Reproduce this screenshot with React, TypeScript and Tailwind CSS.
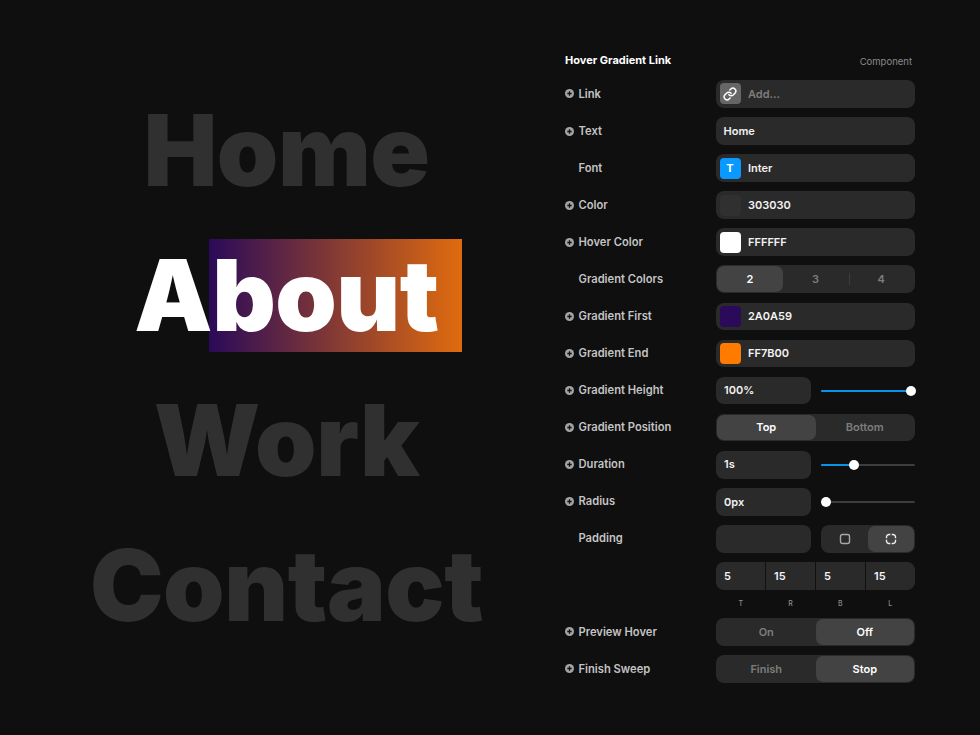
import type { ReactNode } from 'react';
import { Link } from 'lucide-react';

const links = ['Home', 'About', 'Work', 'Contact'];

function PlusDot() {
  return (
    <svg width="9" height="9" viewBox="0 0 9 9" className="shrink-0">
      <circle cx="4.5" cy="4.5" r="4.5" fill="#a3a3a3" />
      <path d="M4.5 2.3v4.4M2.3 4.5h4.4" stroke="#111111" strokeWidth="1.3" />
    </svg>
  );
}

function Row({ label, plus = true, children }: { label?: string; plus?: boolean; children: ReactNode }) {
  return (
    <div className="flex items-center">
      <div className="flex w-[151px] items-center gap-[4.5px] text-[11.2px] font-semibold text-[#c4c4c4]">
        <span className="flex w-[9px] justify-center">{plus && label && <PlusDot />}</span>
        {label}
      </div>
      <div className="w-[199px]">{children}</div>
    </div>
  );
}

function Field({ children, swatch }: { children?: ReactNode; swatch?: ReactNode }) {
  return (
    <div className="flex h-[27.7px] items-center gap-[7.5px] rounded-lg bg-[#2a2a2a] px-[3.5px] text-[11px] font-semibold text-[#f2f2f2]">
      {swatch}
      <span className={swatch ? '' : 'pl-1'}>{children}</span>
    </div>
  );
}

function Swatch({ color }: { color: string }) {
  return <span className="h-[21px] w-[21px] rounded-[4px]" style={{ background: color }} />;
}

function Segments({ items, active }: { items: string[]; active: number }) {
  return (
    <div className="flex h-[27.7px] items-stretch rounded-lg bg-[#2a2a2a] p-px text-[11px] font-semibold">
      {items.map((item, i) => (
        <div
          key={item}
          className={`flex flex-1 items-center justify-center rounded-[7px] ${i === active ? 'bg-[#434343] text-white' : 'text-[#7d7d7d]'}`}
        >
          {item}
        </div>
      ))}
    </div>
  );
}

function ValueSlider({ value, pct, filled = true }: { value: string; pct: number; filled?: boolean }) {
  return (
    <div className="flex items-center gap-[10px]">
      <div className="flex h-[27.7px] w-[95px] items-center rounded-lg bg-[#2a2a2a] pl-2 text-[11px] font-semibold text-[#f2f2f2]">
        {value}
      </div>
      <div className="relative h-[2px] flex-1 rounded-full bg-[#3d3d3d]">
        {filled && <div className="h-full rounded-full bg-[#0a93e6]" style={{ width: `${pct}%` }} />}
        <span
          className="absolute top-1/2 h-[10px] w-[10px] -translate-x-1/2 -translate-y-1/2 rounded-full bg-white"
          style={{ left: `${pct}%` }}
        />
      </div>
    </div>
  );
}

function Padding() {
  return (
    <div className="flex items-center gap-[10px]">
      <div className="h-[27.7px] w-[95px] rounded-lg bg-[#2a2a2a]" />
      <div className="flex h-[27.7px] flex-1 items-stretch rounded-lg bg-[#2a2a2a] p-px">
        <div className="flex flex-1 items-center justify-center">
          <svg width="12" height="12" viewBox="0 0 12 12" fill="none" stroke="#a8a8a8" strokeWidth="1.4">
            <rect x="1.5" y="1.5" width="9" height="9" rx="2" />
          </svg>
        </div>
        <div className="flex flex-1 items-center justify-center rounded-[7px] bg-[#434343]">
          <svg width="12" height="12" viewBox="0 0 12 12" fill="none" stroke="#efefef" strokeWidth="1.4">
            <path d="M1.500 5.300V4a2.500 2.500 0 0 1 2.500-2.500h1.300M6.700 1.500H8a2.500 2.500 0 0 1 2.500 2.500v1.300M10.500 6.700V8a2.500 2.500 0 0 1-2.500 2.500H6.700M5.300 10.500H4a2.500 2.500 0 0 1-2.500-2.500V6.700" />
          </svg>
        </div>
      </div>
    </div>
  );
}

function PaddingValues() {
  const values = ['5', '15', '5', '15'];
  return (
    <div className="flex h-[27.7px] overflow-hidden rounded-lg bg-[#2a2a2a] text-[11px] font-semibold text-[#f2f2f2]">
      {values.map((v, i) => (
        <div key={i} className={`flex flex-1 items-center pl-2 ${i > 0 ? 'border-l border-[#111111]' : ''}`}>
          {v}
        </div>
      ))}
    </div>
  );
}

export default function App() {
  return (
    <div className="flex h-[735px] w-[980px] overflow-hidden bg-[#0f0f0f] font-['Inter',sans-serif]">
      <div className="flex w-[573px] flex-col items-center justify-center gap-8">
        {links.map(name => (
          <a
            key={name}
            className={`relative block px-[23.75px] text-[98.5px] leading-[113px] font-black tracking-[-0.5px] ${name === 'About' ? 'text-white' : 'text-[#303030]'}`}
          >
            {name === 'About' && (
              <span className="absolute inset-y-0 right-0 left-[98px] bg-[linear-gradient(to_right,#2a0a59,#e06b0e)]" />
            )}
            <span className="relative">{name}</span>
          </a>
        ))}
      </div>

      <div className="ml-[-8px] flex w-[350px] flex-col pt-[52px]">
        <div className="mb-[11.6px] flex items-center justify-between pr-[3px]">
          <span className="text-[11px] font-bold text-white">Hover Gradient Link</span>
          <span className="pt-[1.5px] text-[9.5px] leading-[13px] text-[#8a8a8a]">Component</span>
        </div>
        <div className="flex flex-col gap-[9.4px]">
          <Row label="Link">
            <Field swatch={
              <span className="flex h-[21px] w-[21px] items-center justify-center rounded-[4px] bg-[#666666]">
                <Link size={14} color="#ffffff" strokeWidth={2.5} />
              </span>
            }>
              <span className="text-[#7d7d7d]">Add...</span>
            </Field>
          </Row>
          <Row label="Text"><Field>Home</Field></Row>
          <Row label="Font" plus={false}>
            <Field swatch={
              <span className="flex h-[21px] w-[21px] items-center justify-center rounded-[4px] bg-[#0a99ff] text-[11px] font-bold text-white">T</span>
            }>Inter</Field>
          </Row>
          <Row label="Color"><Field swatch={<Swatch color="#303030" />}>303030</Field></Row>
          <Row label="Hover Color"><Field swatch={<Swatch color="#ffffff" />}>FFFFFF</Field></Row>
          <Row label="Gradient Colors" plus={false}>
            <div className="relative">
              <Segments items={['2', '3', '4']} active={0} />
              <span className="absolute top-[8px] left-[133px] h-[12px] w-px bg-[#3d3d3d]" />
            </div>
          </Row>
          <Row label="Gradient First"><Field swatch={<Swatch color="#2a0a59" />}>2A0A59</Field></Row>
          <Row label="Gradient End"><Field swatch={<Swatch color="#ff7b00" />}>FF7B00</Field></Row>
          <Row label="Gradient Height"><ValueSlider value="100%" pct={96} /></Row>
          <Row label="Gradient Position"><Segments items={['Top', 'Bottom']} active={0} /></Row>
          <Row label="Duration"><ValueSlider value="1s" pct={35} /></Row>
          <Row label="Radius"><ValueSlider value="0px" pct={5} filled={false} /></Row>
          <Row label="Padding" plus={false}><Padding /></Row>
          <Row><PaddingValues /></Row>
          <Row>
            <div className="flex h-[9.5px] items-center text-[7px] font-medium text-[#8a8a8a]">
              {['T', 'R', 'B', 'L'].map(l => (
                <span key={l} className="flex-1 text-center">{l}</span>
              ))}
            </div>
          </Row>
          <Row label="Preview Hover"><Segments items={['On', 'Off']} active={1} /></Row>
          <Row label="Finish Sweep"><Segments items={['Finish', 'Stop']} active={1} /></Row>
        </div>
      </div>
    </div>
  );
}
